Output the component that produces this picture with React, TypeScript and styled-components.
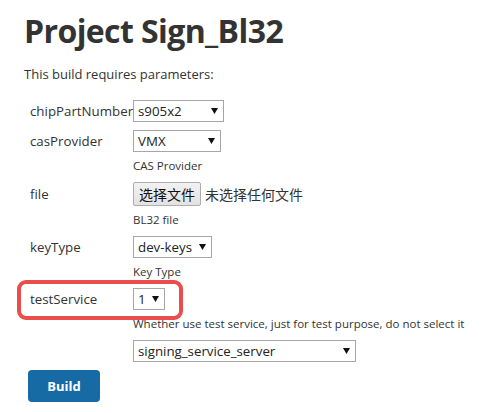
import React from "react";
import styled, { createGlobalStyle } from "styled-components";

const GlobalStyle = createGlobalStyle`
  body {
    margin: 0;
    background: #ffffff;
    color: #333333;
    font-family: "Open Sans", "Noto Sans CJK SC", sans-serif;
  }
`;

const Page = styled.div`
  padding: 11px 24px 0 24px;
`;

const Title = styled.h1`
  margin: 0;
  font-size: 32px;
  line-height: 40px;
  font-weight: 700;
  letter-spacing: -0.6px;
  color: #333333;
`;

const Intro = styled.p`
  margin: 14px 0 0 0;
  font-size: 13px;
  line-height: 18px;
`;

const Form = styled.div`
  margin-top: 17px;
  padding-left: 6px;
  display: flex;
  flex-direction: column;
  gap: 8px;
`;

const Row = styled.div`
  position: relative;
  display: grid;
  grid-template-columns: 103px 1fr;
  align-items: start;
`;

const Label = styled.div<{ $h?: number }>`
  font-size: 13.3px;
  line-height: ${({ $h }) => $h ?? 22}px;
  white-space: nowrap;
`;

const Control = styled.div`
  display: flex;
  flex-direction: column;
  align-items: flex-start;
`;

const Select = styled.div<{ $w: number }>`
  box-sizing: border-box;
  width: ${({ $w }) => $w}px;
  height: 22px;
  border: 1px solid #a6a6a6;
  background: #ffffff;
  display: flex;
  align-items: center;
  justify-content: space-between;
  padding: 0 5px 0 4px;
  font-size: 13.3px;
  color: #222222;
  white-space: nowrap;
`;

const Arrow = () => (
  <svg width="7" height="6" viewBox="0 0 7 6">
    <path d="M0 0h7L3.5 6z" fill="#111" />
  </svg>
);

const Desc = styled.div`
  margin-top: 5px;
  font-size: 11.5px;
  line-height: 17px;
  color: #333333;
  white-space: nowrap;
`;

const FileLine = styled.div`
  display: flex;
  align-items: center;
  gap: 4px;
  font-size: 14px;
`;

const FileButton = styled.div`
  box-sizing: border-box;
  height: 24px;
  padding: 0 5px;
  display: flex;
  align-items: center;
  border: 1px solid #adadad;
  border-radius: 2px;
  background: linear-gradient(#f2f2f2, #e2e2e2);
  color: #111111;
`;

const Highlight = styled.div`
  position: absolute;
  left: -13px;
  top: -8px;
  width: 166px;
  height: 40px;
  box-sizing: border-box;
  border: 4px solid #ea4d4c;
  border-radius: 9px;
  pointer-events: none;
`;

const BuildButton = styled.button`
  width: 72px;
  height: 32px;
  margin-left: -2px;
  border: none;
  border-radius: 4px;
  background: #176ba5;
  color: #ffffff;
  font-family: "Open Sans", sans-serif;
  font-weight: 700;
  font-size: 13px;
`;

export default function App() {
  return (
    <Page>
      <GlobalStyle />
      <Title>Project Sign_Bl32</Title>
      <Intro>This build requires parameters:</Intro>
      <Form>
        <Row>
          <Label>chipPartNumber</Label>
          <Control>
            <Select $w={91}>
              s905x2 <Arrow />
            </Select>
          </Control>
        </Row>
        <Row>
          <Label>casProvider</Label>
          <Control>
            <Select $w={88}>
              VMX <Arrow />
            </Select>
            <Desc>CAS Provider</Desc>
          </Control>
        </Row>
        <Row>
          <Label $h={24}>file</Label>
          <Control>
            <FileLine>
              <FileButton>选择文件</FileButton>
              未选择任何文件
            </FileLine>
            <Desc>BL32 file</Desc>
          </Control>
        </Row>
        <Row>
          <Label>keyType</Label>
          <Control>
            <Select $w={79}>
              dev-keys <Arrow />
            </Select>
            <Desc>Key Type</Desc>
          </Control>
        </Row>
        <Row>
          <Highlight />
          <Label>testService</Label>
          <Control>
            <Select $w={32}>
              1 <Arrow />
            </Select>
            <Desc>Whether use test service, just for test purpose, do not select it</Desc>
          </Control>
        </Row>
        <Row>
          <Label />
          <Control>
            <Select $w={223}>
              signing_service_server <Arrow />
            </Select>
          </Control>
        </Row>
        <div>
          <BuildButton>Build</BuildButton>
        </div>
      </Form>
    </Page>
  );
}
